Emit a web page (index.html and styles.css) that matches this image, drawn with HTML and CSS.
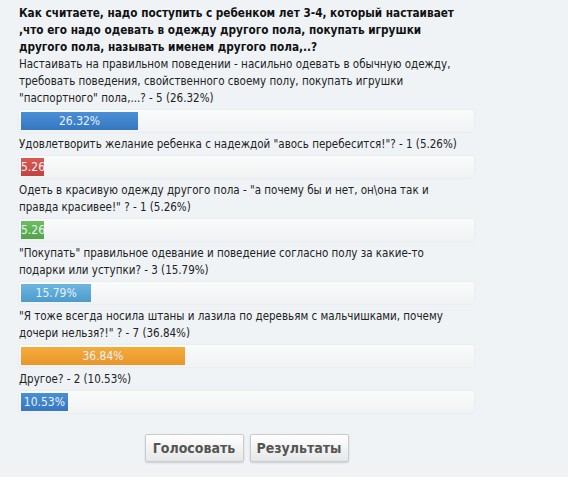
FILE: index.html
```html
<!DOCTYPE html>
<html lang="ru">
<head>
<meta charset="UTF-8" />
<title>Опрос</title>
<link rel="stylesheet" href="styles.css">
</head>
<body>

<div class="poll">
  <div class="question">Как считаете, надо поступить с ребенком лет 3-4, который настаивает ,что его надо одевать в одежду другого пола, покупать игрушки другого пола, называть именем другого пола,..?</div>

  <div class="answer">
    <div class="label">Настаивать на правильном поведении - насильно одевать в обычную одежду, требовать поведения, свойственного своему полу, покупать игрушки "паспортного" пола,...? - 5 (26.32%)</div>
    <div class="track"><div class="bar bar-blue" style="width: 26.32%">26.32%</div></div>
  </div>

  <div class="answer">
    <div class="label">Удовлетворить желание ребенка с надеждой "авось перебесится!"? - 1 (5.26%)</div>
    <div class="track"><div class="bar bar-red" style="width: 5.26%">5.26%</div></div>
  </div>

  <div class="answer">
    <div class="label">Одеть в красивую одежду другого пола - "а почему бы и нет, он\она так и правда красивее!" ? - 1 (5.26%)</div>
    <div class="track"><div class="bar bar-green" style="width: 5.26%">5.26%</div></div>
  </div>

  <div class="answer">
    <div class="label">"Покупать" правильное одевание и поведение согласно полу за какие-то подарки или уступки? - 3 (15.79%)</div>
    <div class="track"><div class="bar bar-sky" style="width: 15.79%">15.79%</div></div>
  </div>

  <div class="answer">
    <div class="label">"Я тоже всегда носила штаны и лазила по деревьям с мальчишками, почему дочери нельзя?!" ? - 7 (36.84%)</div>
    <div class="track"><div class="bar bar-orange" style="width: 36.84%">36.84%</div></div>
  </div>

  <div class="answer">
    <div class="label">Другое? - 2 (10.53%)</div>
    <div class="track"><div class="bar bar-blue" style="width: 10.53%">10.53%</div></div>
  </div>

  <div class="buttons">
    <button class="btn">Голосовать</button>
    <button class="btn">Результаты</button>
  </div>
</div>

</body>
</html>
```

FILE: styles.css
```css
body {
  margin: 0;
  background: #fff;
  font-family: "DejaVu Sans Condensed", "DejaVu Sans", sans-serif;
  font-stretch: condensed;
  font-size: 11.5px;
  color: #222;
}
.poll {
  background: #eff3f6;
  padding: 5px 94px 15px 19px;
}
.question {
  font-weight: bold;
  font-size: 11.7px;
  line-height: 17px;
  color: #111;
  padding-right: 9px;
}
.label {
  line-height: 17px;
  padding-right: 9px;
}
.track {
  margin: 3px 0 4px;
  height: 18px;
  padding: 2px 8px 2px 2px;
  border-radius: 3px;
  background: linear-gradient(#fafbfb, #f1f2f3);
  box-shadow: 0 0 2px rgba(0, 0, 0, 0.08);
}
.bar {
  height: 18px;
  line-height: 18px;
  font-size: 12px;
  color: #e8f0fa;
  text-align: center;
  white-space: nowrap;
  overflow: hidden;
}
.bar-blue { background: linear-gradient(#4a8fd6, #3577c0); }
.bar-red { background: linear-gradient(#d85a54, #c4423d); }
.bar-green { background: linear-gradient(#6cbf5e, #52a548); }
.bar-sky { background: linear-gradient(#6cb6e0, #4d9bcc); }
.bar-orange { background: linear-gradient(#f4ac3c, #e9962a); }

.buttons {
  display: flex;
  justify-content: center;
  gap: 6px;
  margin-top: 21px;
}
.btn {
  font-family: inherit;
  font-stretch: condensed;
  font-weight: bold;
  font-size: 14px;
  color: #555;
  height: 28px;
  width: 99px;
  padding: 0;
  border: 1px solid #c9cbcd;
  border-radius: 2px;
  background: linear-gradient(#ffffff, #e6e7e8);
  box-shadow: 0 1px 2px rgba(0, 0, 0, 0.15);
  cursor: pointer;
}
```
